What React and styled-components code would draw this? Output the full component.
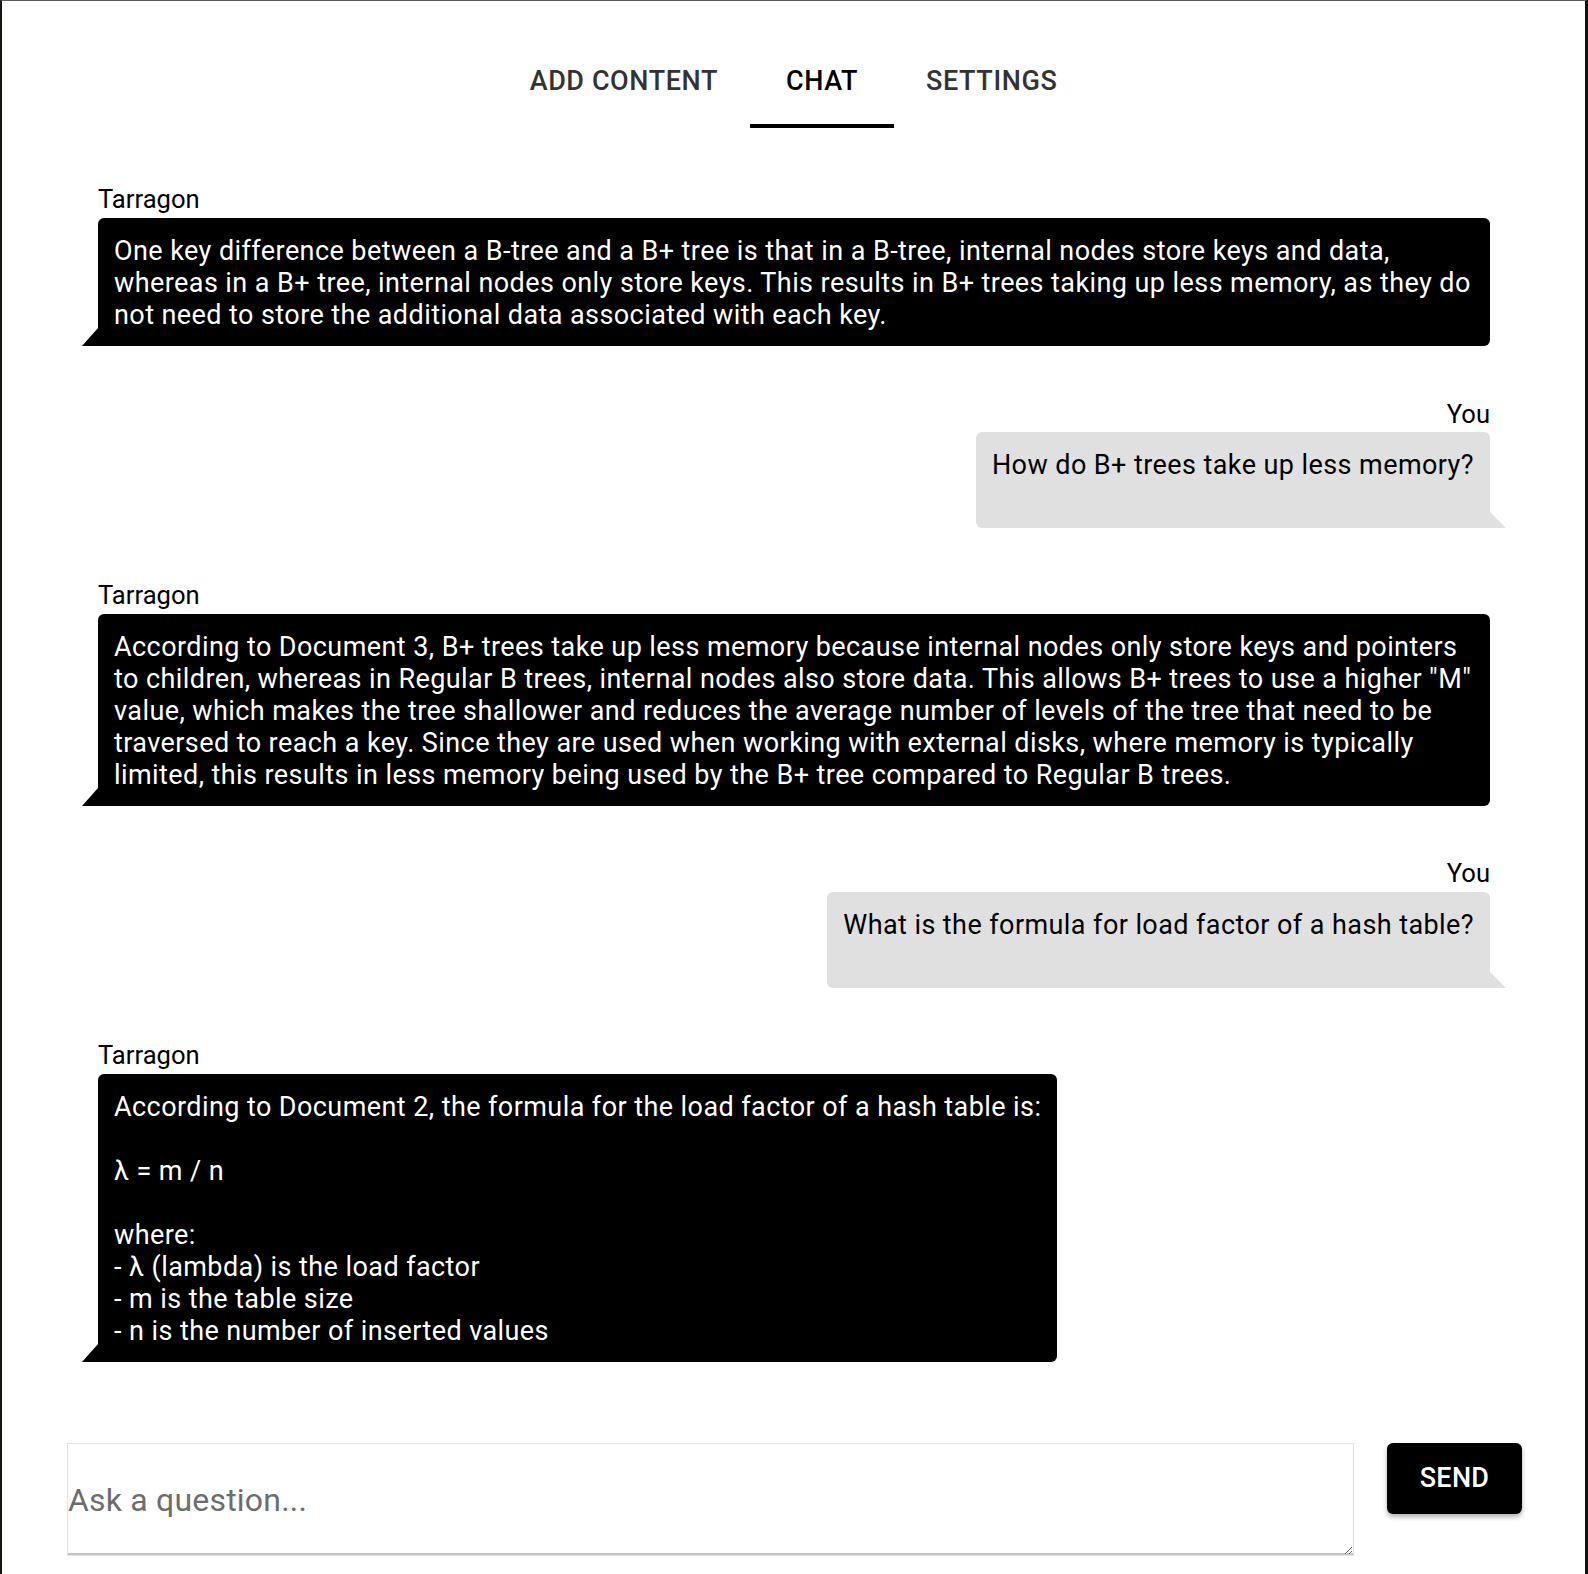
import React from 'react';
import styled, { createGlobalStyle } from 'styled-components';

const GlobalStyle = createGlobalStyle`
    html, body {
        margin: 0;
        padding: 0;
        background: #fff;
    }

    body {
        font-family: Roboto, "Liberation Sans", sans-serif;
        color: #000;
    }
`;

const Frame = styled.div`
    box-sizing: border-box;
    min-height: 1574px;
    display: flex;
    flex-direction: column;
    background: #fff;
    border-top: 1px solid #5b5b5b;
    border-left: 2px solid #16160f;
    border-right: 3px solid #101010;
`;

const TabBar = styled.nav`
    display: flex;
    justify-content: center;
    padding-top: 64.6px;
`;

const Tab = styled.button`
    min-width: 144px;
    padding: 0 32px 27px;
    border: 0;
    border-bottom: 4px solid ${({ $active }) => ($active ? '#000' : 'transparent')};
    background: none;
    font: 500 27px/31.64px Roboto, sans-serif;
    letter-spacing: 0.6px;
    text-transform: uppercase;
    color: ${({ $active }) => ($active ? '#000' : '#333')};
    cursor: pointer;
`;

const Thread = styled.main`
    display: flex;
    flex-direction: column;
    gap: 52.6px;
    padding: 56.2px 95px 0 96px;
`;

const Message = styled.div`
    display: flex;
    flex-direction: column;
    align-items: ${({ $mine }) => ($mine ? 'flex-end' : 'flex-start')};
`;

const Sender = styled.div`
    font-size: 25.6px;
    line-height: 30px;
    margin-bottom: 3.8px;
`;

const Bubble = styled.div`
    position: relative;
    box-sizing: border-box;
    max-width: 100%;
    padding: 17px 16px ${({ $mine }) => ($mine ? '46.4px' : '14.7px')};
    font-size: 27px;
    line-height: 32px;
    letter-spacing: 0.42px;
    white-space: pre-wrap;
    background: ${({ $mine }) => ($mine ? '#e0e0e0' : '#000')};
    color: ${({ $mine }) => ($mine ? '#000' : '#fff')};
    border-radius: ${({ $mine }) => ($mine ? '6px 6px 0 6px' : '6px 6px 6px 0')};

    &::after {
        content: '';
        position: absolute;
        bottom: 0;
        width: 0;
        height: 0;
        ${({ $mine }) => ($mine
            ? `right: -16px;
               border-bottom: 16px solid #e0e0e0;
               border-right: 16px solid transparent;`
            : `left: -16px;
               border-bottom: 18px solid #000;
               border-left: 16px solid transparent;`)}
    }
`;

const Composer = styled.form`
    display: flex;
    align-items: flex-start;
    gap: 33px;
    margin-top: 81px;
    padding: 0 63.3px 0 65px;
`;

const Question = styled.textarea`
    flex: 1;
    box-sizing: border-box;
    height: 113px;
    margin: 0;
    padding: 38.5px 0 0;
    border: 1px solid #e1e1e8;
    box-shadow: inset 0 -2px 0 #c4c4c4;
    font: 400 32px/37.5px Roboto, sans-serif;
    letter-spacing: 0.2px;
    color: #000;
    outline: none;

    &::placeholder {
        color: #6d6d6d;
    }
`;

const SendButton = styled.button`
    flex-shrink: 0;
    width: 134.4px;
    height: 71px;
    border: 0;
    border-radius: 6px;
    background: #000;
    color: #fff;
    font: 500 27px Roboto, sans-serif;
    letter-spacing: 0.3px;
    text-transform: uppercase;
    box-shadow: 0 3px 5px rgba(0, 0, 0, 0.3);
    cursor: pointer;
`;

const tabs = ['Add content', 'Chat', 'Settings'];

const messages = [
    {
        mine: false,
        text: 'One key difference between a B-tree and a B+ tree is that in a B-tree, internal nodes store keys and data, whereas in a B+ tree, internal nodes only store keys. This results in B+ trees taking up less memory, as they do not need to store the additional data associated with each key.'
    },
    { mine: true, text: 'How do B+ trees take up less memory?' },
    {
        mine: false,
        text: 'According to Document 3, B+ trees take up less memory because internal nodes only store keys and pointers to children, whereas in Regular B trees, internal nodes also store data. This allows B+ trees to use a higher "M" value, which makes the tree shallower and reduces the average number of levels of the tree that need to be traversed to reach a key. Since they are used when working with external disks, where memory is typically limited, this results in less memory being used by the B+ tree compared to Regular B trees.'
    },
    { mine: true, text: 'What is the formula for load factor of a hash table?' },
    {
        mine: false,
        text: 'According to Document 2, the formula for the load factor of a hash table is:\n\nλ = m / n\n\nwhere:\n- λ (lambda) is the load factor\n- m is the table size\n- n is the number of inserted values'
    }
];

const App = () => (
    <Frame>
        <GlobalStyle />
        <TabBar>
            {tabs.map((label) => (
                <Tab key={label} $active={label === 'Chat'}>{label}</Tab>
            ))}
        </TabBar>
        <Thread>
            {messages.map((msg, i) => (
                <Message key={i} $mine={msg.mine}>
                    <Sender>{msg.mine ? 'You' : 'Tarragon'}</Sender>
                    <Bubble $mine={msg.mine}>{msg.text}</Bubble>
                </Message>
            ))}
        </Thread>
        <Composer onSubmit={(e) => e.preventDefault()}>
            <Question placeholder="Ask a question..." />
            <SendButton type="submit">Send</SendButton>
        </Composer>
    </Frame>
);

export default App;
